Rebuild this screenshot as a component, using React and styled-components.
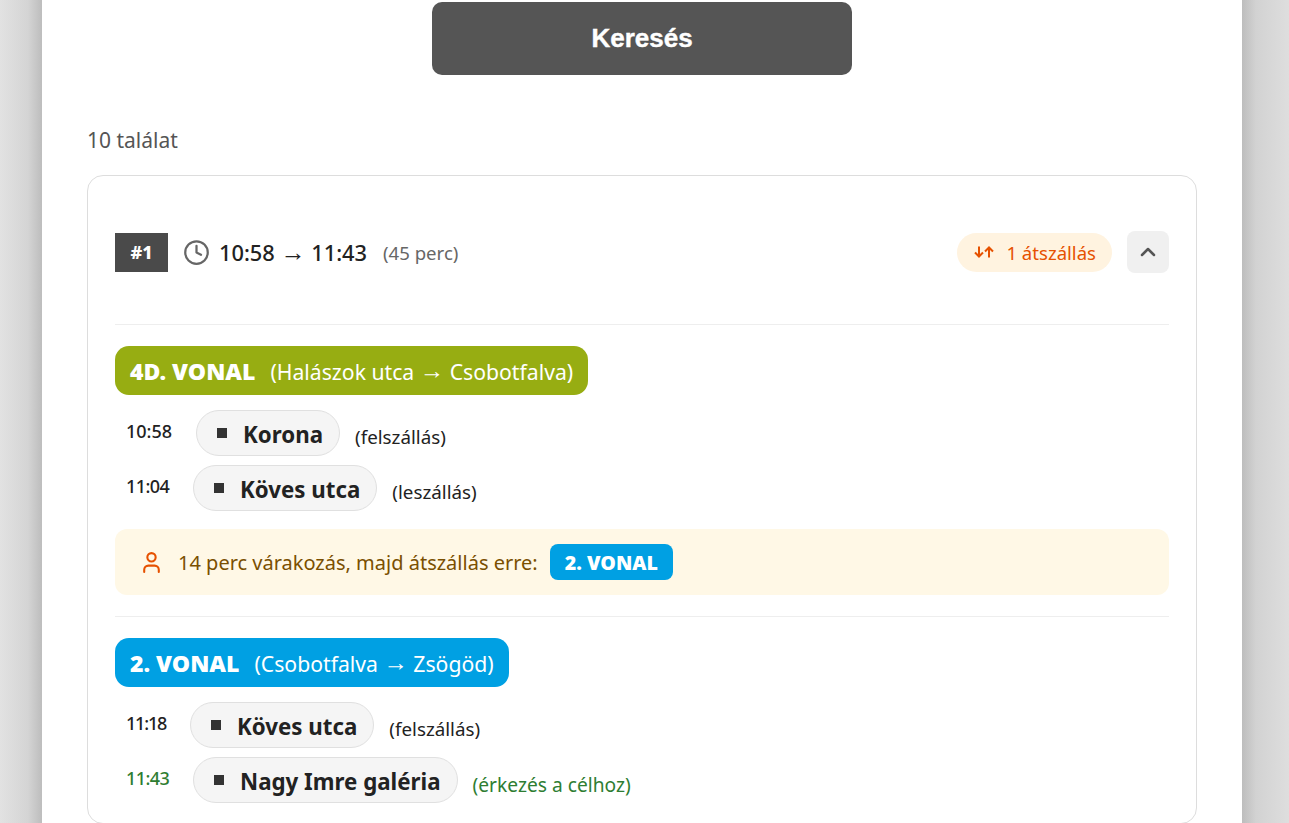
import React from 'react';
import styled, { createGlobalStyle } from 'styled-components';
import { Clock, ChevronUp, User } from 'lucide-react';

const GlobalStyle = createGlobalStyle`
  html, body { margin: 0; padding: 0; height: 823px; overflow: hidden; }
  body { background: #fff; font-family: "Noto Sans", "Open Sans", sans-serif; color: #222; }
`;

const Page = styled.div`
  height: 823px;
  overflow: hidden;
  background: linear-gradient(90deg, #e2e2e2 0, #d4d4d4 28px, #bdbdbd 42px, #bdbdbd 1242px, #d2d2d2 1256px, #dedede 1289px);
`;

const Panel = styled.main`
  width: 1110px;
  height: 821px;
  margin: 0 47px 0 42px;
  padding: 2px 45px 0;
  background: #fff;
`;

const SearchButton = styled.button`
  display: block;
  width: 420px;
  height: 73px;
  margin: 0 auto;
  border: 0;
  border-radius: 10px;
  background: #555;
  color: #fff;
  font-family: "Liberation Sans", Arial, sans-serif;
  font-size: 26px;
  font-weight: 700;
  -webkit-text-stroke: 0.4px #fff;
`;

const Count = styled.p`
  margin: 50px 0 20px;
  height: 30px;
  line-height: 30px;
  font-size: 21px;
  color: #555;
`;

const Card = styled.section`
  border: 1px solid #ddd;
  border-radius: 16px;
  padding: 0 27px 20px;
  background: #fff;
`;

const Header = styled.header`
  display: flex;
  align-items: center;
  box-sizing: border-box;
  height: 149px;
  padding-top: 4px;
  border-bottom: 1px solid #eee;
`;

const Rank = styled.span`
  display: flex;
  align-items: center;
  justify-content: center;
  width: 53px;
  height: 39px;
  background: #4a4a4a;
  color: #fff;
  font-weight: 800;
  font-size: 18px;
`;

const ClockIcon = styled(Clock)`
  margin-left: 15px;
  color: #666;
`;

const Times = styled.span`
  margin-left: 9px;
  font-size: 21.8px;
  font-weight: 500;
  color: #222;
`;

const Arrow = styled.span`
  font-family: "Liberation Sans", Arial, sans-serif;
  font-size: 1.15em;
  line-height: 0;
`;

const Duration = styled.span`
  margin-left: 16px;
  font-size: 18.6px;
  color: #666;
`;

const TransferBadge = styled.span`
  display: flex;
  align-items: center;
  gap: 12px;
  margin-left: auto;
  height: 39px;
  padding: 0 16px 0 17px;
  border-radius: 20px;
  background: #fff3e0;
  color: #e65100;
  font-size: 18.6px;
`;

const ToggleButton = styled.button`
  display: flex;
  align-items: center;
  justify-content: center;
  width: 42px;
  height: 42px;
  margin-left: 15px;
  padding: 0;
  border: 0;
  border-radius: 8px;
  background: #f0f0f0;
  color: #555;
`;

const Leg = styled.div`
  padding-top: 21px;
`;

const LineHeader = styled.div`
  display: inline-flex;
  align-items: center;
  box-sizing: border-box;
  height: 49px;
  padding: 1px 15px 0;
  border-radius: 14px;
  background: ${(p) => p.$color};
  color: #fff;
  font-size: 21.2px;
  white-space: pre;
`;

const LineName = styled.strong`
  margin-right: 15px;
  font-size: 23px;
  font-weight: 900;
`;

const StopList = styled.div`
  display: flex;
  flex-direction: column;
  gap: 9px;
  margin-top: 15px;
`;

const StopRow = styled.div`
  display: flex;
  align-items: center;
  height: 46px;
  padding-left: 11px;
`;

const StopTime = styled.span`
  align-self: flex-start;
  width: ${(p) => p.$width}px;
  margin-top: 9px;
  margin-right: 24px;
  font-size: 18px;
  font-weight: 500;
  white-space: nowrap;
  letter-spacing: ${(p) => (p.$width - 46) / 5}px;
  color: ${(p) => (p.$arrival ? '#2e7d32' : '#222')};
`;

const StopPill = styled.span`
  display: flex;
  align-items: center;
  height: 44px;
  padding: 0 16px 0 20px;
  border: 1px solid #e0e0e0;
  border-radius: 23px;
  background: #f5f5f5;
`;

const StopMark = styled.i`
  width: 10px;
  height: 10px;
  margin-right: 16px;
  background: #333;
`;

const StopName = styled.span`
  margin-top: 2px;
  font-size: 22.3px;
  font-weight: 700;
  color: #222;
`;

const StopNote = styled.span`
  margin: 8px 0 0 15px;
  font-size: ${(p) => (p.$arrival ? '19.2px' : '18.8px')};
  color: ${(p) => (p.$arrival ? '#2e7d32' : '#222')};
`;

const WaitBox = styled.div`
  display: flex;
  align-items: center;
  height: 66px;
  margin-top: 18px;
  padding-left: 24px;
  border-radius: 12px;
  background: #fff8e6;
  color: #7a4f00;
  font-size: 20px;
`;

const WaitIcon = styled(User)`
  margin-right: 14px;
  color: #e65100;
`;

const LineTag = styled.span`
  display: flex;
  align-items: center;
  height: 36px;
  margin-left: 12px;
  padding: 0 15px;
  border-radius: 8px;
  background: #00a0e3;
  color: #fff;
  font-size: 19.6px;
  font-weight: 900;
`;

const Divider = styled.hr`
  height: 1px;
  margin: 21px 0 0;
  border: 0;
  background: #eee;
`;

function SwapIcon() {
  return (
    <svg width="20" height="14" viewBox="0 0 20 14" fill="none" stroke="#e65100" strokeWidth="2">
      <path d="M5 1.500v10M1 7.500 5 11.500l4-4M15 12.500v-10M11 6.500l4-4 4 4" />
    </svg>
  );
}

function Stop({ time, width, name, note, arrival }) {
  return (
    <StopRow>
      <StopTime $arrival={arrival} $width={width}>{time}</StopTime>
      <StopPill>
        <StopMark />
        <StopName>{name}</StopName>
      </StopPill>
      <StopNote $arrival={arrival}>{note}</StopNote>
    </StopRow>
  );
}

export default function App() {
  return (
    <Page>
      <GlobalStyle />
      <Panel>
        <SearchButton>Keresés</SearchButton>
        <Count>10 találat</Count>
        <Card>
          <Header>
            <Rank>#1</Rank>
            <ClockIcon size={27} strokeWidth={2} />
            <Times>10:58 <Arrow>→</Arrow> 11:43</Times>
            <Duration>(45 perc)</Duration>
            <TransferBadge>
              <SwapIcon />
              1 átszállás
            </TransferBadge>
            <ToggleButton>
              <ChevronUp size={24} strokeWidth={2.5} />
            </ToggleButton>
          </Header>
          <Leg>
            <LineHeader $color="#97ad12">
              <LineName>4D. VONAL</LineName>
              (Halászok utca <Arrow>→</Arrow> Csobotfalva)
            </LineHeader>
            <StopList>
              <Stop time="10:58" width={46} name="Korona" note="(felszállás)" />
              <Stop time="11:04" width={43} name="Köves utca" note="(leszállás)" />
            </StopList>
            <WaitBox>
              <WaitIcon size={25} strokeWidth={2} />
              14 perc várakozás, majd átszállás erre:
              <LineTag>2. VONAL</LineTag>
            </WaitBox>
            <Divider />
          </Leg>
          <Leg>
            <LineHeader $color="#00a0e3">
              <LineName>2. VONAL</LineName>
              (Csobotfalva <Arrow>→</Arrow> Zsögöd)
            </LineHeader>
            <StopList>
              <Stop time="11:18" width={40} name="Köves utca" note="(felszállás)" />
              <Stop time="11:43" width={43} name="Nagy Imre galéria" note="(érkezés a célhoz)" arrival />
            </StopList>
          </Leg>
        </Card>
      </Panel>
    </Page>
  );
}
